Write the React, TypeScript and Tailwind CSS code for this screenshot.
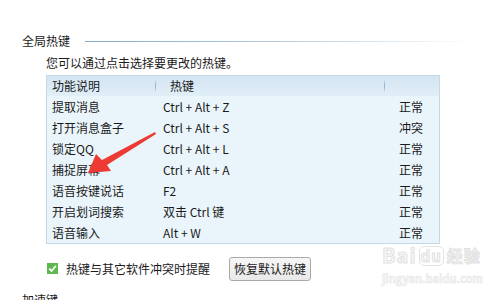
import React from 'react';

interface Hotkey {
  name: string;
  keys: string;
  status: string;
}

const hotkeys: Hotkey[] = [
  { name: '提取消息', keys: 'Ctrl + Alt + Z', status: '正常' },
  { name: '打开消息盒子', keys: 'Ctrl + Alt + S', status: '冲突' },
  { name: '锁定QQ', keys: 'Ctrl + Alt + L', status: '正常' },
  { name: '捕捉屏幕', keys: 'Ctrl + Alt + A', status: '正常' },
  { name: '语音按键说话', keys: 'F2', status: '正常' },
  { name: '开启划词搜索', keys: '双击 Ctrl 键', status: '正常' },
  { name: '语音输入', keys: 'Alt + W', status: '正常' },
];

const font = { fontFamily: '"Noto Sans CJK SC", "Liberation Sans", sans-serif' };

export default function App() {
  return (
    <div
      className="relative w-[500px] h-[300px] overflow-hidden bg-white text-[12px] text-[#1a1a1a]"
      style={font}
    >
      <div className="pl-[22px] pt-[33px]">
        {/* section title */}
        <div className="flex items-center h-[16px]">
          <span className="leading-[16px]">全局热键</span>
          <div className="ml-[15px] mr-[28px] flex-1 h-px bg-gradient-to-r from-[#86aac9] via-[#b4cbde] to-transparent"></div>
        </div>

        <div className="ml-[24px] mt-[6px] leading-[16px]">您可以通过点击选择要更改的热键。</div>

        {/* table */}
        <div className="ml-[24px] mt-[4px] w-[394px] border border-[#c3d9e8] bg-[#eaf5fb]">
          <div className="flex h-[20px] items-center bg-gradient-to-b from-[#d3e5f1] to-[#e1eef7]">
            <div className="w-[108px] pl-[5px] leading-[16px]">功能说明</div>
            <div className="w-px h-[14px] bg-gradient-to-b from-transparent via-[#8aafcc] to-transparent"></div>
            <div className="w-[228px] pl-[14px] leading-[16px]">热键</div>
            <div className="w-px h-[14px] bg-gradient-to-b from-transparent via-[#8aafcc] to-transparent"></div>
          </div>
          {hotkeys.map((h) => (
            <div key={h.name} className="flex h-[21px] items-center">
              <div className="w-[109px] pl-[5px] leading-[16px]">{h.name}</div>
              <div className="w-[229px] pl-[7px] leading-[16px]">{h.keys}</div>
              <div className="pl-[14px] leading-[16px]">{h.status}</div>
            </div>
          ))}
        </div>

        {/* options */}
        <div className="flex items-center ml-[25px] mt-[13px] h-[24px]">
          <div className="w-[11px] h-[11px] -mt-[2px] bg-[#5cb84f] flex items-center justify-center">
            <svg width="9" height="9" viewBox="0 0 9 9">
              <path d="M1.2 4.6 L3.6 7 L7.9 1.8" stroke="white" strokeWidth="1.8" fill="none" />
            </svg>
          </div>
          <span className="ml-[8px] leading-[16px]">热键与其它软件冲突时提醒</span>
          <button className="ml-[19px] w-[82px] h-[24px] border border-[#a9a9a9] rounded-[3px] bg-gradient-to-b from-[#f6f6f6] to-[#e9e9e9] leading-[16px]">
            恢复默认热键
          </button>
        </div>

        <div className="flex items-center mt-[11px] h-[16px]">
          <span className="leading-[16px]">加速键</span>
          <div className="ml-[15px] mr-[28px] flex-1 h-px bg-gradient-to-r from-[#86aac9] via-[#b4cbde] to-transparent"></div>
        </div>
      </div>

      {/* annotation arrow */}
      <svg className="absolute left-0 top-0" width="500" height="300" viewBox="0 0 500 300">
        <polygon
          points="155,132 156,134 107,165 111,171 88,173 96,154 102,160"
          fill="#ee3a34"
        />
      </svg>

      {/* watermark */}
      <div className="absolute left-[382px] top-[244px] flex flex-col items-start">
        <div className="flex items-end font-bold text-[20px] leading-[22px] tracking-[1px]" style={{ WebkitTextStroke: '1px #e2e2e2', color: '#f7f7f7' }}>
          <span>Bai</span>
          <span className="ml-[2px] rounded-[5px] border border-[#e2e2e2] px-[1px] text-[15px] leading-[18px]">du</span>
          <span className="ml-[3px] text-[16px]">经验</span>
        </div>
        <div className="text-[11px] leading-[14px] mt-[5px] font-bold" style={{ WebkitTextStroke: '0.5px #e4e4e4', color: '#f6f6f6' }}>
          jingyan.baidu.com
        </div>
      </div>
    </div>
  );
}
